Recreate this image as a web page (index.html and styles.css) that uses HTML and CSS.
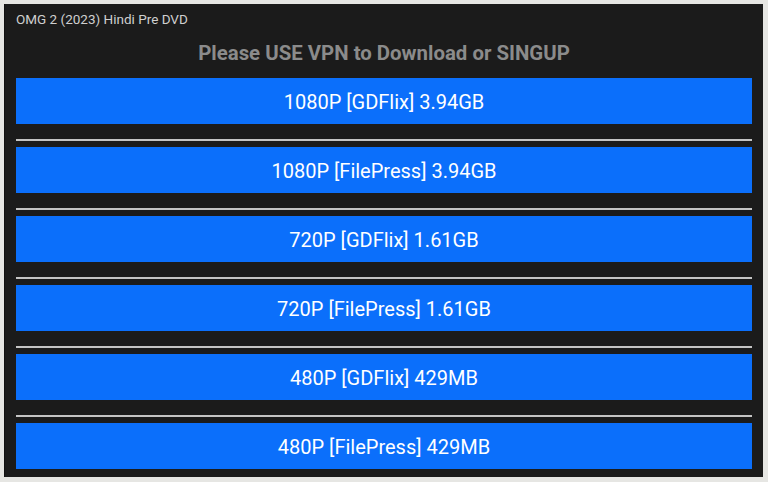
FILE: index.html
```html
<!DOCTYPE html>
<html lang="en">
<head>
  <meta charset="UTF-8" />
  <meta name="viewport" content="width=device-width, initial-scale=1.0"/>
  <title>OMG 2 (2023) Hindi Pre DVD</title>
  <link rel="stylesheet" href="styles.css">
</head>
<body>
  <div class="panel">
    <div class="title">OMG 2 (2023) Hindi Pre DVD</div>
    <h2>Please USE VPN to Download or SINGUP</h2>

    <div class="links">
      <a class="dl" href="#">1080P [GDFlix] 3.94GB</a>
      <hr>
      <a class="dl" href="#">1080P [FilePress] 3.94GB</a>
      <hr>
      <a class="dl" href="#">720P [GDFlix] 1.61GB</a>
      <hr>
      <a class="dl" href="#">720P [FilePress] 1.61GB</a>
      <hr>
      <a class="dl" href="#">480P [GDFlix] 429MB</a>
      <hr>
      <a class="dl" href="#">480P [FilePress] 429MB</a>
    </div>
  </div>
</body>
</html>
```

FILE: styles.css
```css
body {
  margin: 0;
  padding: 4px 5px 5px 4px;
  background: #e6e6e3;
  font-family: Roboto, "Liberation Sans", sans-serif;
}

.panel {
  background: #1b1b1b;
  padding: 8px 11px 8px 11px;
  border-left: 1px solid #111;
}

.title {
  font-size: 13.5px;
  line-height: 14px;
  color: #cfcfcf;
}

h2 {
  margin: 15px 0 13px;
  font-size: 20.4px;
  line-height: 24px;
  font-weight: bold;
  text-align: center;
  color: #8b8b8b;
}

.links {
  display: flex;
  flex-direction: column;
}

.dl {
  display: block;
  height: 46px;
  line-height: 48px;
  background: #0b6ffb;
  color: #fff;
  font-size: 20px;
  text-align: center;
  text-decoration: none;
}

.links hr {
  margin: 15px 0 6px;
  border: 0;
  height: 2px;
  background: #c4c4c4;
}
```
